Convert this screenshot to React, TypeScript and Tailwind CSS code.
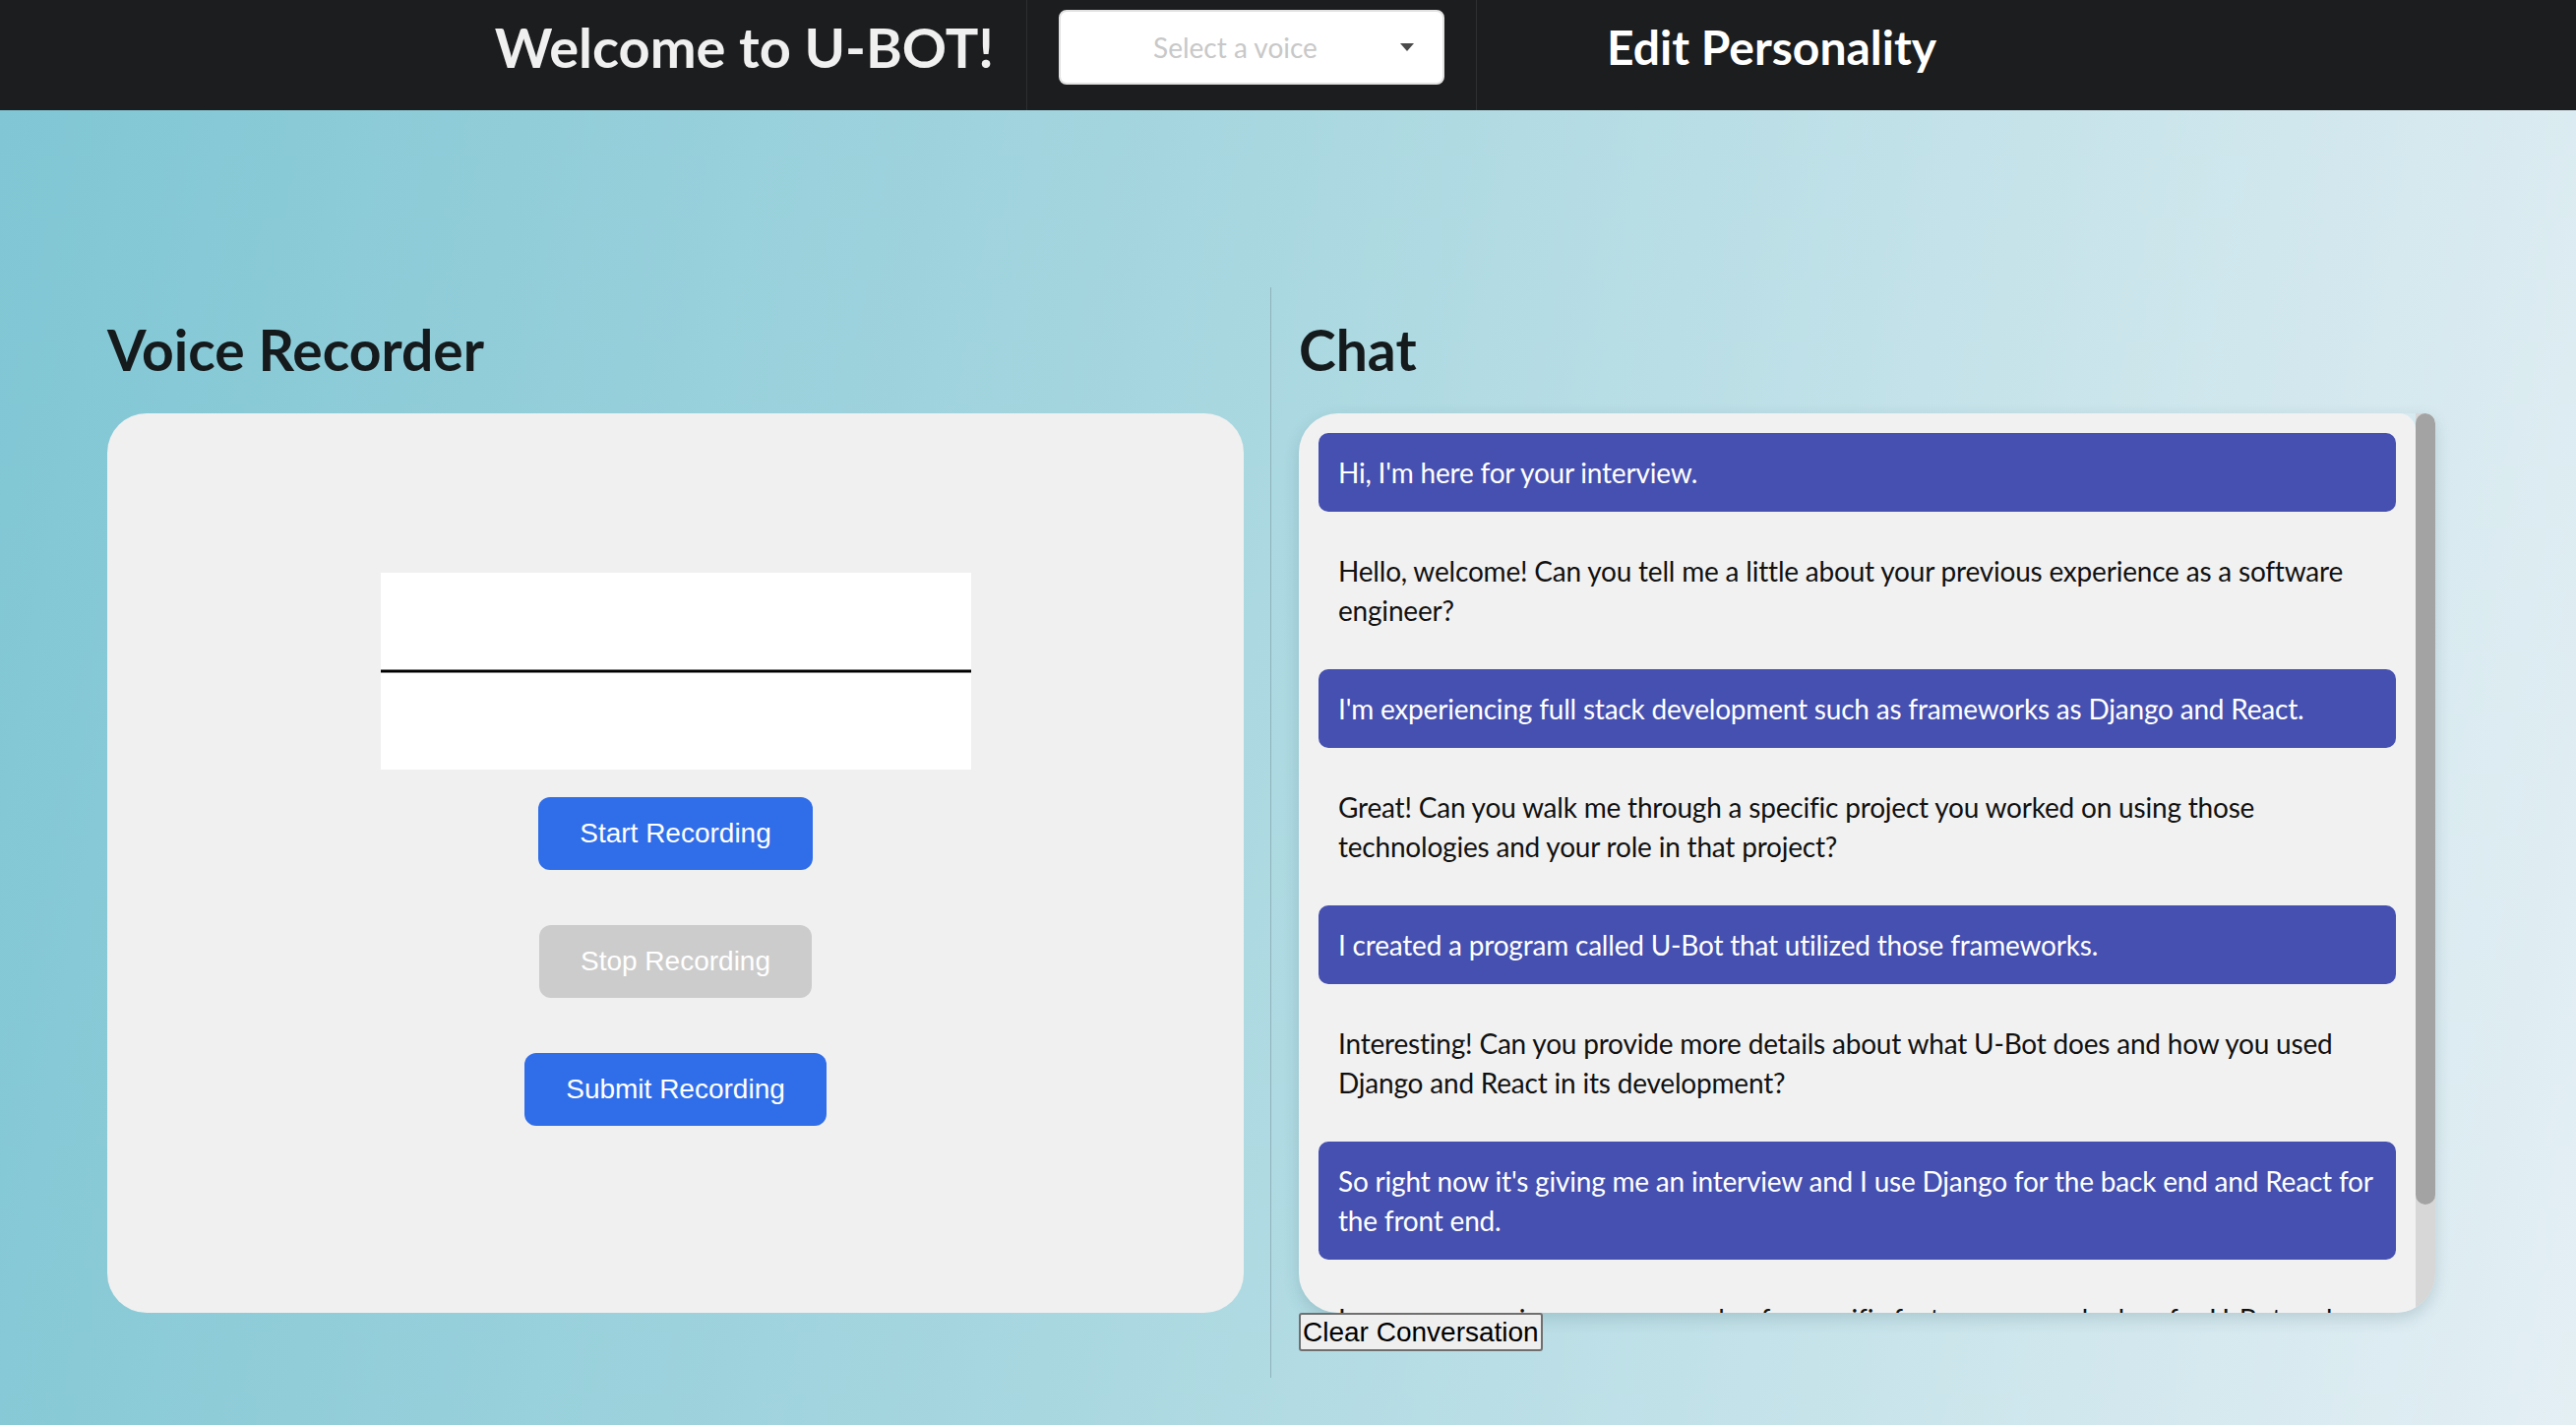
const messages = [
  { from: 'user', text: "Hi, I'm here for your interview." },
  {
    from: 'bot',
    text: 'Hello, welcome! Can you tell me a little about your previous experience as a software engineer?',
  },
  {
    from: 'user',
    text: "I'm experiencing full stack development such as frameworks as Django and React.",
  },
  {
    from: 'bot',
    text: 'Great! Can you walk me through a specific project you worked on using those technologies and your role in that project?',
  },
  { from: 'user', text: 'I created a program called U-Bot that utilized those frameworks.' },
  {
    from: 'bot',
    text: 'Interesting! Can you provide more details about what U-Bot does and how you used Django and React in its development?',
  },
  {
    from: 'user',
    text: "So right now it's giving me an interview and I use Django for the back end and React for the front end.",
  },
  {
    from: 'bot',
    text: 'I see, can you give me an example of a specific feature you worked on for U-Bot and how you built it with Django?',
  },
];

function Header() {
  return (
    <header className="flex h-[112px] shrink-0 bg-[#1c1d1f] font-['Lato',sans-serif]">
      {/* title */}
      <div className="flex w-[1044px] items-center justify-end border-r border-[#2e2f31] pb-[16px] pr-[33px]">
        <h1 className="text-[56px] font-bold leading-[1.2] text-[#f0f0f0]">Welcome to U-BOT!</h1>
      </div>

      {/* voice select */}
      <div className="flex items-center border-r border-[#2e2f31] px-[32px] pb-[16px]">
        <div className="flex h-[76px] w-[392px] items-center rounded-[8px] border-2 border-[#e2e2e2] bg-white">
          <span className="flex-1 pl-[10px] text-center text-[28px] text-[#c8c8c8]">Select a voice</span>
          <svg width="14" height="8" viewBox="0 0 14 8" className="mr-[29px]">
            <path d="M0 0 L14 0 L7 8 Z" fill="#4a4a4a" />
          </svg>
        </div>
      </div>

      {/* personality link */}
      <div className="flex items-center pb-[16px] pl-[132px]">
        <span className="text-[48px] font-bold leading-[1.2] text-white">Edit Personality</span>
      </div>
    </header>
  );
}

function VoiceRecorder() {
  return (
    <section className="w-[1155px]">
      <h2 className="mb-[31px] mt-[30px] text-[57px] font-bold leading-[67px] text-[#151a1c]">
        Voice Recorder
      </h2>
      <div className="flex h-[914px] flex-col items-center justify-center rounded-[40px] bg-[#f0f0f0]">
        <div className="h-[200px] w-[600px] bg-white">
          <svg width="600" height="200" viewBox="0 0 600 200">
            <line x1="0" y1="100" x2="600" y2="100" stroke="#000" strokeWidth="3" />
          </svg>
        </div>
        <div className="flex flex-col items-center font-['Liberation_Sans',Arial,sans-serif] text-[28px] text-white">
          <button className="my-[28px] h-[74px] w-[279px] rounded-[12px] bg-[#306de8]">
            Start Recording
          </button>
          <button className="my-[28px] h-[74px] w-[277px] rounded-[12px] bg-[#cccccc]">
            Stop Recording
          </button>
          <button className="my-[28px] h-[74px] w-[307px] rounded-[12px] bg-[#306de8]">
            Submit Recording
          </button>
        </div>
      </div>
    </section>
  );
}

function Chat() {
  return (
    <section className="h-[1108px] w-[1184px] border-l border-[#8fb3bd] pl-[28px]">
      <h2 className="mb-[31px] mt-[30px] text-[57px] font-bold leading-[67px] text-[#151a1c]">Chat</h2>

      <div className="flex h-[914px] w-[1155px] overflow-hidden rounded-[40px] rounded-tr-[10px] shadow-[0_6px_16px_rgba(40,80,90,0.18)]">
        <div className="flex flex-1 flex-col gap-[20px] overflow-hidden rounded-tr-[17px] bg-[#f1f1f1] p-[20px]">
          {messages.map((m, i) => (
            <div
              key={i}
              className={
                m.from === 'user'
                  ? 'shrink-0 rounded-[10px] bg-[#4550b0] p-[20px] text-[28px] leading-[40px] tracking-[-0.2px] text-white'
                  : 'shrink-0 p-[20px] text-[28px] leading-[40px] tracking-[-0.2px] text-[#111]'
              }
            >
              {m.text}
            </div>
          ))}
        </div>

        {/* scrollbar */}
        <div className="w-[20px] bg-[#d7d7d7]">
          <div className="h-[804px] rounded-[10px] bg-[#a3a3a3]" />
        </div>
      </div>

      <button className="h-[39px] rounded-[3px] border-2 border-[#6f6f6f] bg-[#efefef] px-[2px] font-['Liberation_Sans',Arial,sans-serif] text-[28px] leading-none text-black">
        Clear Conversation
      </button>
    </section>
  );
}

export default function App() {
  return (
    <div className="flex h-[1448px] flex-col font-['Lato',sans-serif]">
      <Header />
      <main className="flex flex-1 bg-[linear-gradient(100deg,#80c6d4_0%,#a8d7e0_45%,#e4eff4_100%)] pl-[109px] pt-[180px]">
        <div className="mr-[27px]">
          <VoiceRecorder />
        </div>
        <Chat />
      </main>
    </div>
  );
}
